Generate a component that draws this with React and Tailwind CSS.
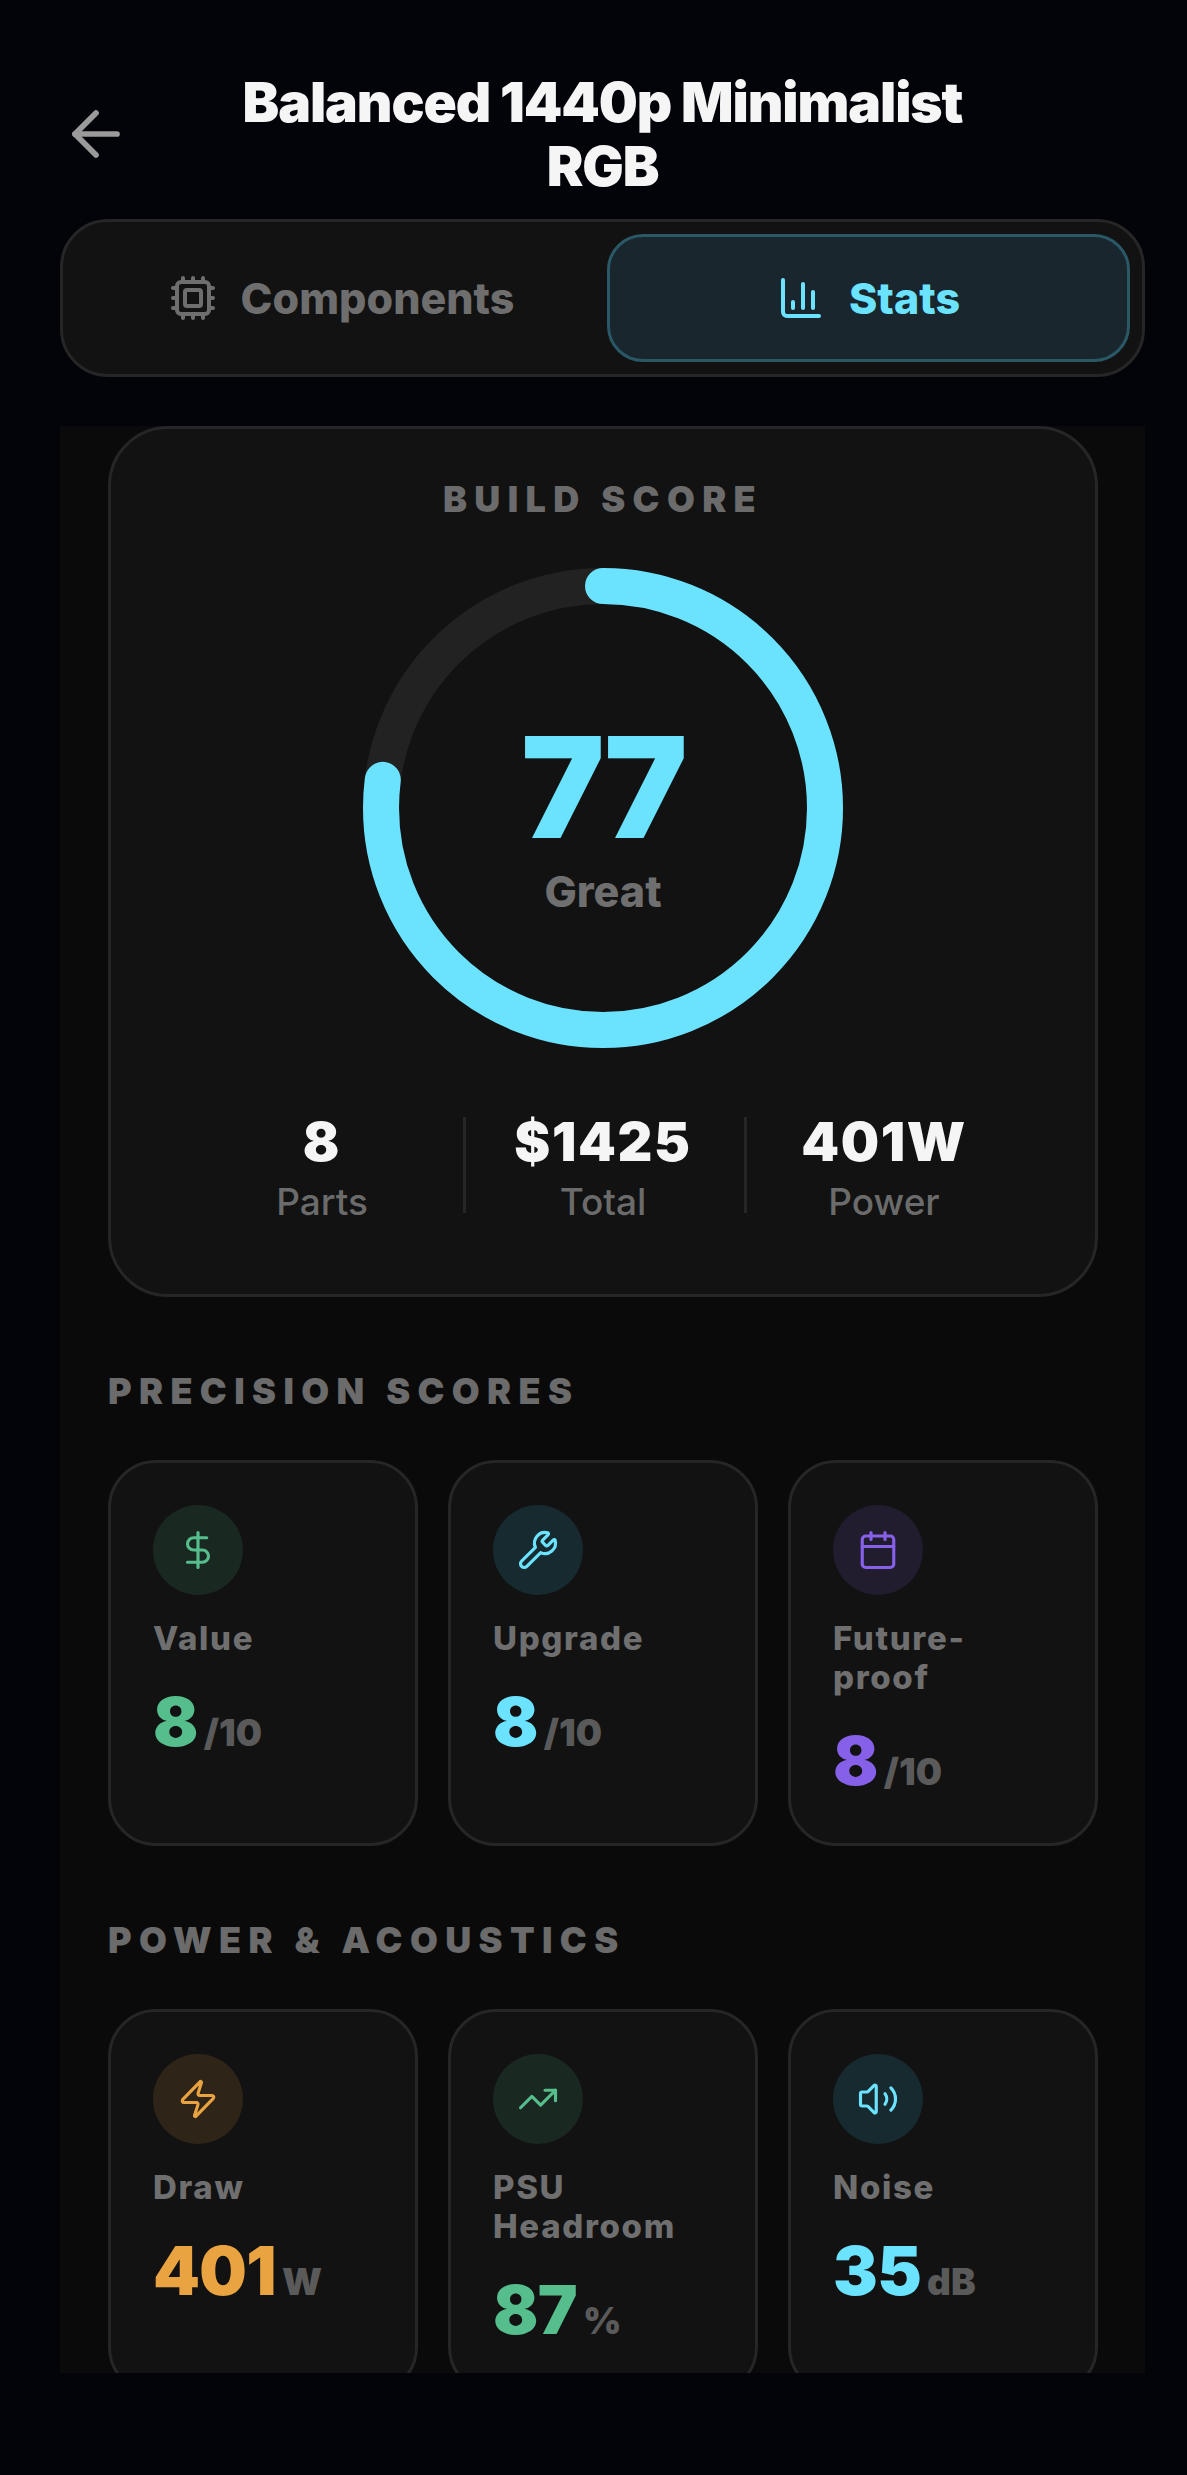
import { ArrowLeft, Calendar, ChartColumn, Cpu, DollarSign, TrendingUp, Volume2, Wrench, Zap } from 'lucide-react'

const precision = [
  { label: 'Value', value: '8', unit: '/10', icon: DollarSign, text: 'text-[#56bd8c]', circle: 'bg-[#1a2822]' },
  { label: 'Upgrade', value: '8', unit: '/10', icon: Wrench, text: 'text-[#6be3ff]', circle: 'bg-[#172a30]' },
  { label: 'Future-proof', value: '8', unit: '/10', icon: Calendar, text: 'text-[#8660e8]', circle: 'bg-[#211c2e]' },
]

const power = [
  { label: 'Draw', value: '401', unit: 'W', icon: Zap, text: 'text-[#e9a441]', circle: 'bg-[#2f2418]' },
  { label: 'PSU Headroom', value: '87', unit: '%', icon: TrendingUp, text: 'text-[#56bd8c]', circle: 'bg-[#1a2822]' },
  { label: 'Noise', value: '35', unit: 'dB', icon: Volume2, text: 'text-[#6be3ff]', circle: 'bg-[#172a30]' },
]

const totals = [
  { value: '8', label: 'Parts' },
  { value: '$1425', label: 'Total' },
  { value: '401W', label: 'Power' },
]

const SectionTitle = ({ children, className }) => (
  <h2 className={`text-[36px] leading-[44px] font-black tracking-[0.205em] text-[#6b6b6b] ${className}`}>
    {children}
  </h2>
)

const MetricCard = ({ label, value, unit, icon: Icon, text, circle }) => (
  <div className="rounded-[48px] border-[3px] border-[#262626] bg-[#121212] p-[42px]">
    <div className={`flex h-[90px] w-[90px] items-center justify-center rounded-full ${circle} ${text}`}>
      <Icon size={42} strokeWidth={1.8} />
    </div>
    <div className="mt-[24px] text-[33px] leading-[39px] font-extrabold tracking-[0.05em] text-[#6f6f6f]">{label}</div>
    <div className="mt-[24px] flex items-baseline leading-[80px]">
      <span className={`text-[67px] font-black tracking-[-0.01em] ${text}`}>{value}</span>
      <span className="ml-[6px] text-[37px] leading-none font-black text-[#5a5a5a]">{unit}</span>
    </div>
  </div>
)

const ScoreRing = () => (
  <div className="relative mx-auto mt-[47px] h-[480px] w-[480px]">
    <svg viewBox="0 0 480 480" className="h-full w-full -rotate-90">
      <circle cx="240" cy="240" r="222" fill="none" stroke="#222222" strokeWidth="36" />
      <circle cx="240" cy="240" r="222" fill="none" stroke="#6be3ff" strokeWidth="36" strokeLinecap="round" strokeDasharray="1074 1395" />
    </svg>
    <div className="absolute inset-0 flex flex-col items-center pt-[144px]">
      <div className="text-[140px] leading-[150px] font-black tracking-[-0.02em] text-[#6be3ff]">77</div>
      <div className="mt-[4px] text-[43px] leading-[50px] font-extrabold text-[#6f6f6f]">Great</div>
    </div>
  </div>
)

export default function App() {
  return (
    <div className="flex h-[2475px] flex-col overflow-hidden bg-[#03030a] pr-[42px] pl-[60px] font-['Inter',sans-serif]">
      <header className="flex items-center pt-[70px]">
        <button className="w-[130px] text-[#9a9a9a]">
          <ArrowLeft size={72} strokeWidth={1.9} />
        </button>
        <h1 className="flex-1 text-center text-[55px] leading-[64px] font-black tracking-[-0.02em] text-[#f5f5f5]">
          Balanced 1440p Minimalist RGB
        </h1>
        <div className="w-[130px]" />
      </header>

      <div className="mt-[21px] grid h-[158px] grid-cols-2 gap-[9px] rounded-[48px] border-[3px] border-[#262626] bg-[#121212] p-[12px]">
        <button className="flex items-center justify-center gap-[24px] pl-[10px] text-[43px] font-extrabold text-[#6e6e6e]">
          <Cpu size={48} strokeWidth={2} />
          Components
        </button>
        <button className="flex items-center justify-center gap-[24px] rounded-[36px] border-[3px] border-[#2a5866] bg-[#19262d] text-[43px] font-extrabold text-[#6be3ff]">
          <ChartColumn size={48} strokeWidth={2} />
          Stats
        </button>
      </div>

      <main className="mt-[49px] h-[1947px] overflow-hidden bg-[#0a0a0a] pr-[47px] pl-[48px]">
        <section className="rounded-[60px] border-[3px] border-[#262626] bg-[#121212] pt-[48px] pb-[70px]">
          <SectionTitle className="text-center">BUILD SCORE</SectionTitle>
          <ScoreRing />
          <div className="mx-auto mt-[69px] flex w-[843px] items-start">
            {totals.map((item, i) => (
              <div key={item.label} className={`flex-1 ${i > 0 ? 'relative' : ''}`}>
                {i > 0 && <div className="absolute top-0 left-0 h-[96px] w-[3px] bg-[#262626]" />}
                <div className="text-center text-[54px] leading-[50px] font-black tracking-[0.03em] text-[#f5f5f5]">{item.value}</div>
                <div className="mt-[13px] text-center text-[37px] leading-[44px] font-medium text-[#6b6b6b]">{item.label}</div>
              </div>
            ))}
          </div>
        </section>

        <SectionTitle className="mt-[72px]">PRECISION SCORES</SectionTitle>
        <div className="mt-[47px] grid grid-cols-3 gap-[30px]">
          {precision.map((item) => <MetricCard key={item.label} {...item} />)}
        </div>

        <SectionTitle className="mt-[72px]">POWER &amp; ACOUSTICS</SectionTitle>
        <div className="mt-[47px] grid grid-cols-3 gap-[30px]">
          {power.map((item) => <MetricCard key={item.label} {...item} />)}
        </div>
      </main>
    </div>
  )
}
